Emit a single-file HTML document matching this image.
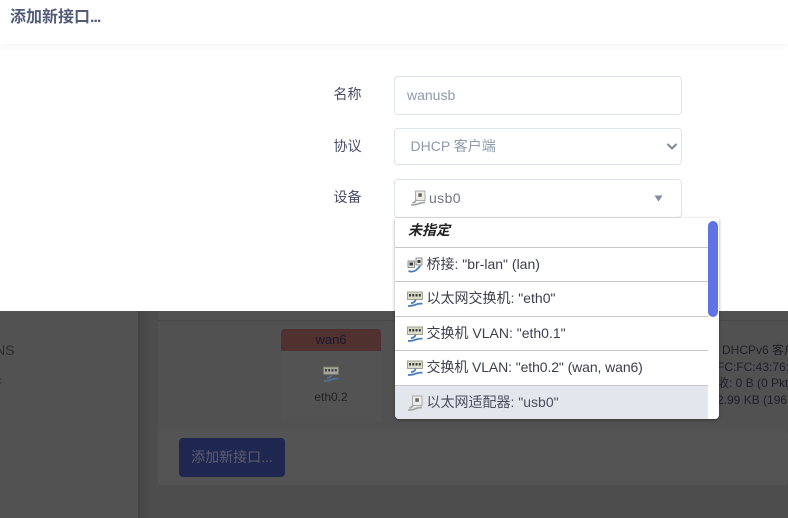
<!DOCTYPE html>
<html lang="zh">
<head>
<meta charset="utf-8">
<title>添加新接口</title>
<style>
html,body{margin:0;padding:0;width:788px;height:518px;overflow:hidden;background:#4d4d4d;}
body{position:relative;font-family:"Liberation Sans","Noto Sans CJK SC",sans-serif;}
.a{position:absolute;white-space:nowrap;}
.box{position:absolute;box-sizing:border-box;background:#fff;border:1px solid #dfe3ea;border-radius:4px;}
.row{position:absolute;left:0;width:313px;box-sizing:border-box;font-size:14px;color:#3b3f4c;white-space:nowrap;}
.row span{position:absolute;left:31.500px;top:50%;margin-top:-1px;transform:translateY(-50%);}
.row svg{position:absolute;left:12px;top:50%;margin-top:-8px;}
.line{position:absolute;left:0;width:313px;height:1px;background:#c9c9c9;}
</style>
</head>
<body>
<svg width="0" height="0" style="position:absolute">
<symbol id="eth" viewBox="0 0 16 16">
<rect x="0.500" y="1" width="15" height="7.500" fill="#dcdcc8" stroke="#8f8f7c" stroke-width=".8"/>
<path d="M2 3h2v2.500H2zM5.200 3h2v2.500h-2zM8.500 3h2v2.500h-2zM11.800 3h2v2.500h-2z" fill="#3a3a3a"/>
<path d="M1 14.800c2.500 .4 5.500 -.2 8 -1.300 2 -.8 4 -1 6.500 -.8M8.500 8.500c0 2 -2 3.300 -4.500 3.700" fill="none" stroke="#4f7fb8" stroke-width="1.800"/>
</symbol>
<symbol id="usb" viewBox="0 0 16 16">
<rect x="5.500" y="1" width="9.500" height="9.500" fill="#ecece8" stroke="#a5a5a0" stroke-width=".9"/>
<rect x="8.300" y="3.300" width="3.500" height="3.500" fill="#66665f"/>
<path d="M1 15c3 0 6 -.5 8 -1.500 2 -.8 4 -1 6 -1M6 9.500c0 2 -1.500 3 -3.500 3.500" fill="none" stroke="#a5a9a2" stroke-width="1.800"/>
</symbol>
<symbol id="br" viewBox="0 0 16 16">
<rect x="1" y="4" width="6.500" height="6.500" fill="#e3e3dc" stroke="#777" stroke-width=".8"/>
<rect x="9" y="1" width="6" height="7" fill="#eeeeea" stroke="#777" stroke-width=".8"/>
<path d="M2.500 5.500h3.500v3H2.500zM10.500 3h3v3h-3z" fill="#3a3a3a"/>
<path d="M1.500 14c3 1.200 6.500 .5 8.500 -1.700 1 -1.200 2 -2.300 3.500 -3.300" fill="none" stroke="#4f7fb8" stroke-width="1.800"/>
</symbol>
</svg>

<!-- dimmed background page -->
<div class="a" style="left:0;top:311px;width:138px;height:207px;background:#525252;"></div>
<div class="a" style="left:138px;top:311px;width:12px;height:207px;background:linear-gradient(90deg,#444,#4d4d4d);"></div>
<div class="a" style="left:-15px;top:342px;font-size:14px;color:#2c2c2c;">DNS</div>
<div class="a" style="left:-26px;top:375px;font-size:14px;color:#2c2c2c;">运行</div>

<div class="a" style="left:158px;top:311px;width:630px;height:119px;background:#515151;"></div>
<div class="a" style="left:158px;top:320px;width:630px;height:1px;background:#494949;"></div>
<div class="a" style="left:158px;top:430px;width:630px;height:55px;background:#545454;border-radius:4px;"></div>

<div class="a" style="left:281px;top:329px;width:100px;height:93px;background:#535353;border-radius:4px 4px 0 0;"></div>
<div class="a" style="left:281px;top:329px;width:100px;height:22px;background:#503130;border-radius:4px 4px 0 0;text-align:center;font-size:13px;line-height:21px;color:#1c1a30;">wan6</div>
<svg class="a" style="left:323px;top:366px;opacity:.6" width="16" height="16"><use href="#eth"/></svg>
<div class="a" style="left:281px;top:390px;width:100px;text-align:center;font-size:12px;line-height:14px;color:#232323;">eth0.2</div>

<div class="a" style="left:717px;top:342px;font-size:12px;line-height:16.500px;color:#1f1f28;">
<span style="margin-left:5px">DHCPv6 客户端</span><br>FC:FC:43:76:3<br>收: 0 B (0 Pkts<br>2.99 KB (196
</div>

<div class="a" style="left:179px;top:438px;width:106px;height:39px;background:#1f2650;border-radius:4px;text-align:center;font-size:14px;line-height:38px;color:#5c5f70;">添加新接口...</div>

<!-- modal -->
<div class="a" style="left:0;top:0;width:788px;height:311px;background:#fff;"></div>
<div class="a" style="left:0;top:0;width:788px;height:44px;background:#fff;box-shadow:0 2px 6px rgba(40,50,90,.05);"></div>
<div class="a" style="left:10px;top:8px;font-size:16px;font-weight:700;line-height:20px;color:#525c77;">添加新接口<span style="letter-spacing:-1px">...</span></div>

<div class="a" style="left:333.500px;top:85px;font-size:14px;line-height:18px;color:#474c66;">名称</div>
<div class="a" style="left:333.500px;top:137px;font-size:14px;line-height:18px;color:#474c66;">协议</div>
<div class="a" style="left:333.500px;top:188px;font-size:14px;line-height:18px;color:#474c66;">设备</div>

<div class="box" style="left:394px;top:76px;width:288px;height:39px;"></div>
<div class="a" style="left:407px;top:86px;font-size:14px;line-height:19px;color:#8d99ad;">wanusb</div>

<div class="box" style="left:394px;top:128px;width:288px;height:37px;"></div>
<div class="a" style="left:410.500px;top:137px;font-size:14px;line-height:19px;color:#8d99ad;">DHCP 客户端</div>
<svg class="a" style="left:666px;top:142px" width="12" height="9" viewBox="0 0 12 9"><path d="M1.500 2l4.500 4.500L10.500 2" fill="none" stroke="#7f8796" stroke-width="2"/></svg>

<div class="box" style="left:394px;top:179px;width:288px;height:39px;"></div>
<svg class="a" style="left:410px;top:190px" width="16" height="16"><use href="#usb"/></svg>
<div class="a" style="left:429px;top:189px;font-size:14px;line-height:19px;letter-spacing:.4px;color:#6f7585;">usb0</div>
<svg class="a" style="left:654px;top:195px" width="9" height="7" viewBox="0 0 9 7"><path d="M.5 .5h8L4.500 6.500z" fill="#808aa0"/></svg>

<!-- dropdown -->
<div class="a" style="left:395px;top:218px;width:324px;height:201px;background:#fff;border-radius:0 0 4px 4px;box-shadow:0 1px 3px rgba(0,0,0,.35);overflow:hidden;">
  <div class="row" style="top:0;height:29px;font-style:italic;font-weight:700;color:#222;"><span style="left:13px;top:12px;margin-top:0;">未指定</span></div>
  <div class="line" style="top:29px;"></div>
  <div class="row" style="top:30px;height:33px;"><svg width="16" height="16"><use href="#br"/></svg><span>桥接: "br-lan" (lan)</span></div>
  <div class="line" style="top:63px;"></div>
  <div class="row" style="top:64px;height:34px;"><svg width="16" height="16"><use href="#eth"/></svg><span>以太网交换机: "eth0"</span></div>
  <div class="line" style="top:98px;"></div>
  <div class="row" style="top:99px;height:33px;"><svg width="16" height="16"><use href="#eth"/></svg><span>交换机 VLAN: "eth0.1"</span></div>
  <div class="line" style="top:132px;"></div>
  <div class="row" style="top:133px;height:34px;"><svg width="16" height="16"><use href="#eth"/></svg><span style="letter-spacing:-.1px">交换机 VLAN: "eth0.2" (wan, wan6)</span></div>
  <div class="line" style="top:167px;"></div>
  <div class="row" style="top:168px;height:33px;background:#e4e6ee;color:#4a4e5c;"><svg width="16" height="16"><use href="#usb"/></svg><span>以太网适配器: "usb0"</span></div>
  <div class="a" style="left:313px;top:3px;width:10px;height:96px;background:#5f73e4;border-radius:5px;"></div>
</div>
</body>
</html>
